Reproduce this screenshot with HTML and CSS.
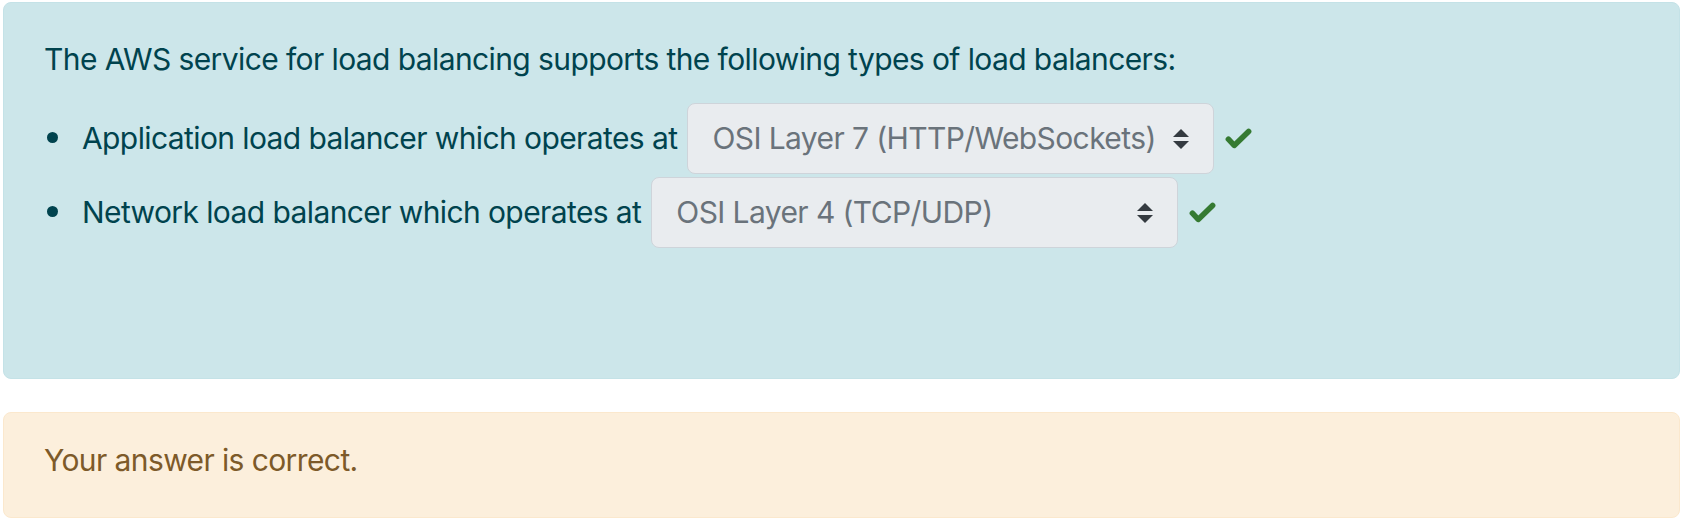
FILE: index.html
```html
<!DOCTYPE html>
<html lang="en">
<head>
<meta charset="utf-8">
<title>Question</title>
<link rel="stylesheet" href="styles.css">
</head>
<body>
<div class="que">
  <div class="formulation">
    <p class="qtext">The AWS service for load balancing supports the following types of load balancers:</p>
    <ul class="answers">
      <li>Application load balancer which operates at<span class="select-wrap"><select class="custom-select"><option>OSI Layer 7 (HTTP/WebSockets)</option><option>OSI Layer 4 (TCP/UDP)</option></select><svg class="arrows" viewBox="0 0 4 5" width="16" height="20"><path d="M2 0L0 2h4zm0 5L0 3h4z" fill="#343a40"/></svg></span><svg class="check" viewBox="0 0 27 22" width="27" height="22"><path d="M3.4 11.2L9.2 17.4L23.6 3.4" fill="none" stroke="#357a32" stroke-width="5.6" stroke-linecap="round" stroke-linejoin="round"/></svg></li>
      <li>Network load balancer which operates at<span class="select-wrap"><select class="custom-select"><option>OSI Layer 4 (TCP/UDP)</option><option>OSI Layer 7 (HTTP/WebSockets)</option></select><svg class="arrows" viewBox="0 0 4 5" width="16" height="20"><path d="M2 0L0 2h4zm0 5L0 3h4z" fill="#343a40"/></svg></span><svg class="check" viewBox="0 0 27 22" width="27" height="22"><path d="M3.4 11.2L9.2 17.4L23.6 3.4" fill="none" stroke="#357a32" stroke-width="5.6" stroke-linecap="round" stroke-linejoin="round"/></svg></li>
    </ul>
  </div>
  <div class="outcome">
    <div class="feedback">Your answer is correct.</div>
  </div>
</div>
</body>
</html>
```
FILE: styles.css
```css
html, body {
  margin: 0;
  background: #fff;
}
body {
  padding: 2px 2px 0 3px;
  font-family: Inter, "Noto Sans", "Liberation Sans", sans-serif;
  font-size: 30px;
  line-height: 45px;
  letter-spacing: -0.6px;
}
.formulation {
  background: #cce6ea;
  border: 1px solid #c4e2e7;
  border-radius: 8px;
  color: #00434e;
  padding: 34px 40px 24px 40px;
}
.qtext {
  margin: 0 0 21px 0;
}
.answers {
  margin: 0 0 106px 0;
  padding-left: 38px;
  list-style: none;
}
.answers li::before {
  content: "";
  display: inline-block;
  width: 11px;
  height: 11px;
  border-radius: 50%;
  background: currentColor;
  margin-left: -35px;
  margin-right: 24px;
  vertical-align: 6px;
}
.answers li + li {
  margin-top: 3px;
}
.select-wrap {
  position: relative;
  display: inline-block;
  margin-left: 10px;
}
.custom-select {
  -webkit-appearance: none;
  appearance: none;
  width: 527px;
  height: 71px;
  box-sizing: border-box;
  padding: 12px 48px 12px 24px;
  border: 1px solid #ced4da;
  border-radius: 8px;
  background: #e9ecef;
  color: #6a737b;
  font-family: inherit;
  font-size: 30px;
  line-height: 45px;
  letter-spacing: -0.6px;
  margin: 0;
}
.arrows {
  position: absolute;
  right: 25px;
  top: 26px;
  pointer-events: none;
}
.check {
  margin-left: 11px;
  vertical-align: -1px;
}
.outcome {
  margin-top: 33px;
  background: #fcefdc;
  border: 1px solid #fbe8cd;
  border-radius: 8px;
  color: #7d5a29;
  padding: 25px 40px 34px 40px;
}
```
